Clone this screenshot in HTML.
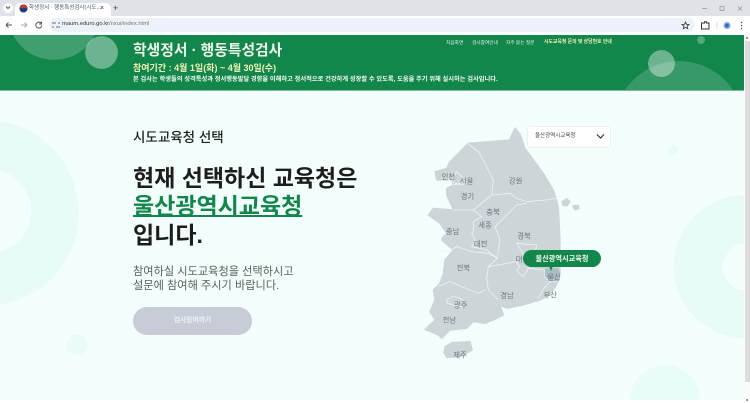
<!DOCTYPE html>
<html lang="ko">
<head>
<meta charset="utf-8">
<title>학생정서 · 행동특성검사</title>
<style>
html,body{margin:0;padding:0;background:#fff}
body{width:750px;height:403px;overflow:hidden;position:relative;font-family:"Liberation Sans","Noto Sans CJK KR",sans-serif}
#w{position:absolute;left:0;top:0;width:750px;height:403px;overflow:hidden;filter:blur(.35px)}
.a{position:absolute;white-space:nowrap;line-height:1}
.c{position:absolute;border-radius:50%}
</style>
</head>
<body>
<div id="w">
<!-- browser chrome -->
<div class="a" style="left:0;top:0;width:750px;height:16px;background:#dfe3e8"></div>
<div class="a" style="left:0;top:16px;width:750px;height:19px;background:#fff"></div>
<div class="c" style="left:3px;top:3px;width:10px;height:10px;background:#fff"></div>
<div class="a" style="left:15px;top:3px;width:96px;height:14px;background:#fff;border-radius:5px 5px 0 0"></div>
<svg class="a" style="left:19px;top:4px" width="9" height="9" viewBox="0 0 10 10"><circle cx="5" cy="5" r="4.500" fill="#1c3f7c"/><path d="M1 4A4 4 0 0 1 9 5C7 3 5 6 1 4Z" fill="#d0342c"/></svg>
<div class="a" style="left:29px;top:6px;font-size:5.500px;color:#555">학생정서 · 행동특성검사(시도...</div>
<div class="a" style="left:100px;top:5px;font-size:7px;color:#333">×</div>
<div class="a" style="left:113px;top:4px;font-size:9px;color:#444">+</div>
<svg class="a" style="left:0;top:0" width="60" height="35" fill="none" stroke="#555" stroke-width="1"><path d="M6 6.500l2 2 2-2M6 25h6M6 25l2.500-2.500M6 25l2.500 2.500"/><path d="M21 25h6M27 25l-2.500-2.500M27 25l-2.500 2.500" stroke="#aaa"/><path d="M41 23a3 3 0 1 0 .8 2.500M41.500 21.500v2.500h-2.500"/></svg>
<div class="a" style="left:49px;top:18px;width:646px;height:14px;background:#edf2fa;border-radius:7px"></div>
<svg class="a" style="left:52px;top:21px" width="8" height="8" fill="none" stroke="#444" stroke-width=".8"><path d="M0 2h4M6 2h2M0 6h2M4 6h4"/></svg>
<div class="a" style="left:62px;top:22px;font-size:5.800px;color:#333">maum.eduro.go.kr<span style="color:#777">/nxui/index.html</span></div>
<svg class="a" style="left:680px;top:20px" width="70" height="11" fill="none"><path d="M5.500 2l1 2.300 2.500.2-1.900 1.700.6 2.500-2.200-1.300-2.200 1.300.6-2.500-1.900-1.700 2.500-.2z" stroke="#444" stroke-width=".9"/><path d="M21.500 3h3V1.800h2V3h2.500v6h-7.500z" stroke="#333" stroke-width="1"/><path d="M37 2v7" stroke="#ccc" stroke-width=".7"/><circle cx="47" cy="5.500" r="3.500" fill="#7da7ea"/><circle cx="47" cy="5.500" r="1.700" fill="#2f63c4"/><circle cx="61.500" cy="2.500" r=".7" fill="#444"/><circle cx="61.500" cy="5.500" r=".7" fill="#444"/><circle cx="61.500" cy="8.500" r=".7" fill="#444"/></svg>
<svg class="a" style="left:700px;top:3px" width="50" height="11" fill="none" stroke="#999" stroke-width=".8"><path d="M2 5.500h5M20 3.500h4v4h-4zM38 3.500l4 4M42 3.500l-4 4"/></svg>

<!-- page -->
<div class="a" style="left:0;top:35px;width:744px;height:365px;background:
radial-gradient(ellipse 41.500px 41.500px at -10px 176px,#f2fffc 99%,transparent 100%),
radial-gradient(circle 93px at -14px 178px,#e8fbf7 99.500%,transparent 100%),
radial-gradient(circle 10.500px at 77px 310px,#ebfcf8 98%,transparent 100%),
radial-gradient(circle 5px at 673px 115px,#e8fbf7 98%,transparent 100%),
radial-gradient(ellipse 22px 23.500px at 745px 232px,#f2fffc 99%,transparent 100%),
radial-gradient(circle 71.500px at 745px 231.500px,#e8fbf7 99.500%,transparent 100%),
radial-gradient(circle 35px at 665px 365px,#eafcf8 99.500%,transparent 100%),
#f3fffc"></div>
<!-- header -->
<div class="a" style="left:0;top:35px;width:744px;height:55px;background:
radial-gradient(circle 16.500px at 101.500px 17.500px,rgba(255,255,255,.38) 98%,transparent 100%),
radial-gradient(ellipse 45px 42.500px at 54px -17.500px,rgba(255,255,255,.2) 99%,transparent 100%),
radial-gradient(circle 13.500px at 661.500px 28.500px,rgba(255,255,255,.38) 98%,transparent 100%),
radial-gradient(circle 65px at 679px 91px,rgba(255,255,255,.16) 99.500%,transparent 100%),
radial-gradient(circle 4px at 701px 5px,rgba(255,255,255,.28) 95%,transparent 100%),
#12864b"></div>
<div class="a" style="left:0;top:90px;width:744px;height:1px;background:#7fb79a"></div>

<div class="a" style="left:133px;top:43.500px;font-size:14.800px;font-weight:700;color:#f0f7ea">학생정서 · 행동특성검사</div>
<div class="a" style="left:133px;top:64px;font-size:9px;font-weight:700;color:#f4f4b8">참여기간 : 4월 1일(화) ~ 4월 30일(수)</div>
<div class="a" style="left:133px;top:76.500px;font-size:6.250px;font-weight:700;color:#f4faf2">본 검사는 학생들의 성격특성과 정서행동발달 경향을 이해하고 정서적으로 건강하게 성장할 수 있도록, 도움을 주기 위해 실시하는 검사입니다.</div>

<div class="a" style="left:446px;top:41px;font-size:4.700px;color:#e8f3ea">처음화면</div>
<div class="a" style="left:472px;top:41px;font-size:4.700px;color:#e8f3ea">검사참여안내</div>
<div class="a" style="left:506px;top:41px;font-size:4.700px;color:#e8f3ea">자주 묻는 질문</div>
<div class="a" style="left:544px;top:41px;font-size:4.850px;font-weight:700;color:#f4f4b8">시도교육청 문의 및 상담번호 안내</div>

<div class="a" style="left:133px;top:131px;font-size:13.500px;font-weight:500;color:#222">시도교육청 선택</div>
<div class="a" style="left:133px;top:167px;font-size:23px;font-weight:700;color:#1d1d1d">현재 선택하신 교육청은</div>
<div class="a" style="left:133px;top:195px;font-size:23px;font-weight:700;color:#12864b;text-decoration:underline;text-decoration-thickness:2px;text-underline-offset:1px">울산광역시교육청</div>
<div class="a" style="left:133px;top:224px;font-size:23px;font-weight:700;color:#1d1d1d">입니다.</div>
<div class="a" style="left:133px;top:267px;font-size:11.200px;color:#5d5d5d">참여하실 시도교육청을 선택하시고</div>
<div class="a" style="left:133px;top:281px;font-size:11.200px;color:#5d5d5d">설문에 참여해 주시기 바랍니다.</div>
<div class="a" style="left:133px;top:307px;width:119px;height:28px;border-radius:14px;background:#c8ccd6"></div>
<div class="a" style="left:133px;top:317.500px;width:119px;text-align:center;font-size:6.800px;font-weight:700;color:#eef0f3">검사참여하기</div>

<!-- map -->
<svg class="a" style="left:410px;top:120px" width="210" height="250" viewBox="0 0 630 750">
  <g fill="#cdd5d8" stroke="#cdd5d8" stroke-width="4" stroke-linejoin="round">
    <path d="M175 70L298 60L315 24L330 42L345 85L400 160L430 210L445 260L450 360L450 460L445 485L420 525L390 540L340 555L290 565L270 555L280 585L250 600L225 610L190 605L170 625L120 630L95 655L85 645L45 628L75 600L60 575L75 540L70 510L90 490L100 460L105 420L130 390L95 360L100 350L110 340L90 310L55 285L70 265L130 270L110 225L110 205L130 195L125 180L80 180L75 155L110 145L120 125Z"/>
    <path d="M105 680L125 668L180 665L187 690L150 710L110 712L102 698Z"/>
    <path d="M456 245L470 236L480 245L470 258L458 255Z"/>
    <path d="M488 258L505 255L507 265L495 270Z"/>
  </g>
  <path d="M403 445L445 445L450 460L447 485L420 484L403 470Z" fill="#aebcc4"/>
  <g fill="none" stroke="#eef3f3" stroke-width="2.500" stroke-linejoin="round">
    <path d="M175 72L205 95L225 130L250 180L245 225L190 270L130 270"/>
    <path d="M245 225L300 220L320 235L350 245L405 240L440 235"/>
    <path d="M190 270L215 290L190 305L190 335L185 340L195 360L185 380L230 390L262 415"/>
    <path d="M350 250L320 255L255 320L270 360L262 415L235 440L230 475L235 510L265 540"/>
    <path d="M90 390L115 395L140 380L185 395L235 400L262 415"/>
    <path d="M85 500L120 485L155 500L205 520L225 510"/>
    <path d="M320 370L380 375L375 400L350 420L355 445L340 470L320 452L330 440L320 430L345 415L335 395Z"/>
    <path d="M235 440L320 425"/>
    <path d="M355 445L403 450"/>
    <path d="M110 175L125 185L150 195L170 190M130 195L150 190L165 180L140 155L130 170L125 180"/>
    <path d="M403 445L403 470L420 485L445 485M420 485L402 505L385 535"/>
    <path d="M110 540L130 528L150 535L165 545L155 560L130 555L112 550Z"/>
  </g>
  <g font-family='"Liberation Sans","Noto Sans CJK KR",sans-serif' fill="#6c777c" style="font-size:22px" text-anchor="middle">
    <text x="115" y="178">인천</text>
    <text x="170" y="190">서울</text>
    <text x="317" y="190">강원</text>
    <text x="172" y="237">경기</text>
    <text x="249" y="284">충북</text>
    <text x="225" y="323">세종</text>
    <text x="128" y="342">충남</text>
    <text x="342" y="355">경북</text>
    <text x="212" y="380">대전</text>
    <text x="160" y="452">전북</text>
    <text x="337" y="426">대구</text>
    <text x="432" y="478">울산</text>
    <text x="291" y="534">경남</text>
    <text x="421" y="532">부산</text>
    <text x="152" y="563">광주</text>
    <text x="118" y="607">전남</text>
    <text x="150" y="713">제주</text>
  </g>
</svg>

<!-- tooltip -->
<div class="a" style="left:523px;top:250px;width:78px;height:17px;border-radius:9px;background:#12864b"></div>
<div class="a" style="left:548.500px;top:266px;width:0;height:0;border-left:2.500px solid transparent;border-right:2.500px solid transparent;border-top:5px solid #12864b"></div>
<div class="a" style="left:523px;top:254.500px;width:78px;text-align:center;font-size:7.200px;font-weight:700;color:#f4faf2">울산광역시교육청</div>

<!-- select -->
<div class="a" style="left:527px;top:126px;width:82px;height:20px;background:#fff;border:1px solid #eef1f1;border-radius:3px"></div>
<div class="a" style="left:535px;top:134px;font-size:5.500px;color:#444">울산광역시교육청</div>
<svg class="a" style="left:596px;top:133px" width="9" height="7" fill="none" stroke="#333" stroke-width="1.200"><path d="M1 1.500L4.500 5 8 1.500"/></svg>

<!-- scrollbar -->
<div class="a" style="left:744px;top:35px;width:6px;height:365px;background:#fbfbfb"></div>
<div class="a" style="left:745px;top:41px;width:4.500px;height:341px;background:#dcdcdc"></div>
<div class="a" style="left:746px;top:37px;width:2px;height:2px;background:#999"></div>
<div class="a" style="left:746px;top:399px;width:2px;height:2px;background:#999"></div>
</div>
</body>
</html>
